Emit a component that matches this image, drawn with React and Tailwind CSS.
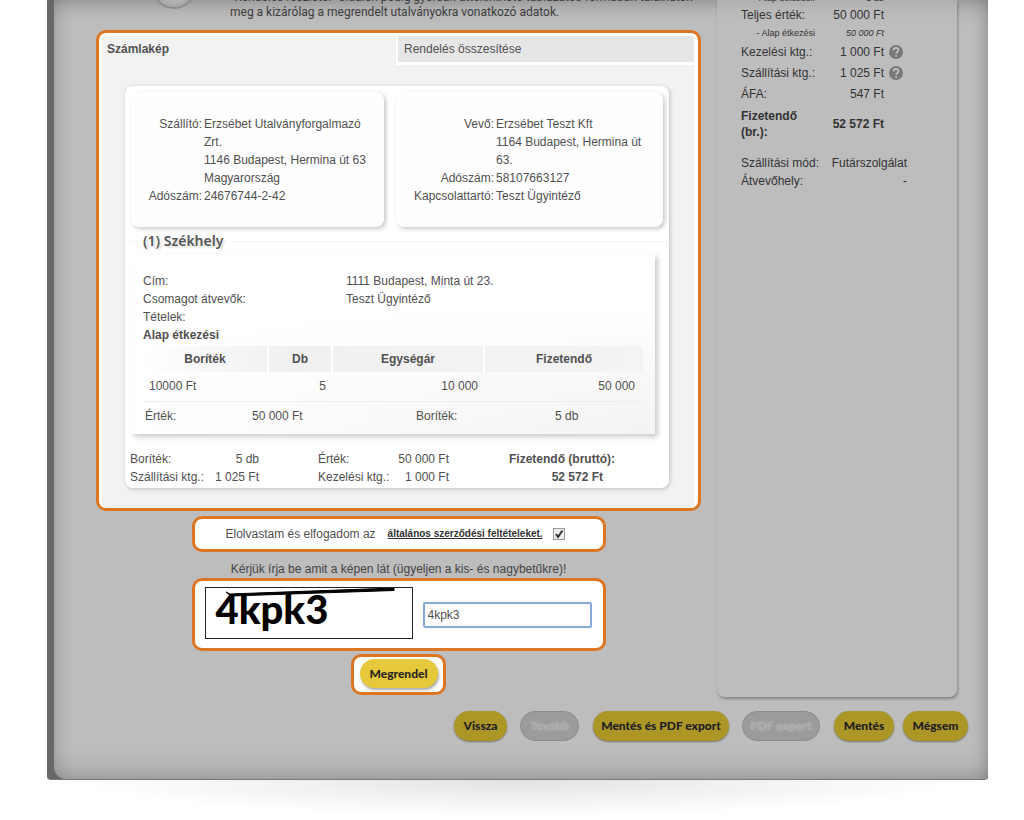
import React, { useState } from "react";

const parties = [
  {
    id: "supplier",
    labelWidth: "w-[71px]",
    valueWidth: "w-[172px]",
    rows: [
      { label: "Szállító:", value: "Erzsébet Utalványforgalmazó Zrt." },
      { label: "", value: "1146 Budapest, Hermina út 63 Magyarország" },
      { label: "Adószám:", value: "24676744-2-42" },
    ],
  },
  {
    id: "customer",
    labelWidth: "w-[98px]",
    valueWidth: "w-[158px]",
    rows: [
      { label: "Vevő:", value: "Erzsébet Teszt Kft" },
      { label: "", value: "1164 Budapest, Hermina út 63." },
      { label: "Adószám:", value: "58107663127" },
      { label: "Kapcsolattartó:", value: "Teszt Ügyintéző" },
    ],
  },
];

const yellowButton =
  "h-[30px] rounded-full bg-[#ac9726] font-['Lato',sans-serif] text-xs font-black text-[#1c1c22] shadow-[0_1px_2px_rgba(0,0,0,0.4)]";
const disabledButton =
  "h-[30px] rounded-full border border-[#8c8c8c] bg-[#9b9b9b] font-['Lato',sans-serif] text-xs font-black text-[#adadad] [text-shadow:0_0_3px_#b4b4b4]";
const highlight = "border-3 border-[#dc7622] bg-white rounded-[10px]";

const HelpIcon = () => (
  <svg width="16" height="16" viewBox="0 0 16 16" aria-hidden="true">
    <circle cx="8" cy="8" r="7" fill="#787878" />
    <path
      d="M5.6 6.3c0-3.2 5-3.1 4.9-.2 0 1.9-2.3 1.8-2.3 3.6M8.1 11.3v1.4"
      fill="none"
      stroke="#c2c2c2"
      strokeWidth="1.8"
    />
  </svg>
);

const InfoHeader = () => (
  <header className="flex h-[30px] items-end overflow-hidden pb-2.5 pl-[57px]">
    <svg
      className="shrink-0"
      width="48"
      height="48"
      viewBox="0 0 48 48"
      aria-hidden="true"
    >
      <circle cx="21" cy="15" r="21" fill="#a9a9a9" stroke="#8b8b8b" strokeWidth="2" />
      <circle cx="21" cy="15" r="17" fill="#b1b1b1" />
      <path d="M21 2v20" stroke="#8b8b8b" strokeWidth="5" />
    </svg>
    <p className="ml-[29px] font-['Roboto',sans-serif] leading-[15px] whitespace-nowrap text-[#3c3c3c]">
      “Rendelés részletei” oldalon pedig gyorsan áttekinthető táblázatos formában
      találhatók
      <br />
      meg a kizárólag a megrendelt utalványokra vonatkozó adatok.
    </p>
  </header>
);

const PartyCard = ({ party, className }) => (
  <section
    className={`h-[135px] rounded-lg bg-[#fefefe] pt-[23px] shadow-[2px_2px_4px_rgba(0,0,0,0.22)] ${className}`}
  >
    <dl>
      {party.rows.map((row) => (
        <div key={row.value} className="flex gap-0.5">
          <dt className={`shrink-0 text-right ${party.labelWidth}`}>{row.label}</dt>
          <dd className={party.valueWidth}>{row.value}</dd>
        </div>
      ))}
    </dl>
  </section>
);

const Invoice = () => (
  <div className="mt-[21px] mr-[25px] ml-[23px] rounded-lg bg-white pt-1.5 pr-1 pl-1.5 shadow-[1px_1px_4px_rgba(0,0,0,0.22)]">
    <div className="flex gap-3 pr-0.5">
      <PartyCard party={parties[0]} className="w-[253px] shrink-0" />
      <PartyCard party={parties[1]} className="min-w-0 flex-1" />
    </div>

    <fieldset className="mt-1 border-t border-[#f3f3f3] pr-2.5">
      <legend className="ml-2 px-1 font-['Noto_Sans',sans-serif] text-sm leading-5 font-semibold text-[#555] [text-shadow:2px_2px_2px_#ddd]">
        (1) Székhely
      </legend>
      <div className="mt-[3px] h-[180px] bg-linear-to-b from-white from-30% to-[#f3f3f3] shadow-[3px_3px_5px_rgba(0,0,0,0.2)]">
        <div className="h-full bg-linear-to-r from-white to-transparent pt-[18px] pr-3 pl-3">
          <dl className="grid grid-cols-[203px_1fr]">
            <dt>Cím:</dt>
            <dd>1111 Budapest, Minta út 23.</dd>
            <dt>Csomagot átvevők:</dt>
            <dd>Teszt Ügyintéző</dd>
            <dt>Tételek:</dt>
            <dd></dd>
          </dl>
          <h3 className="font-bold">Alap étkezési</h3>
          <table className="mt-0.5 w-full table-fixed border-collapse">
            <colgroup>
              <col className="w-[125px]" />
              <col className="w-16" />
              <col className="w-[152px]" />
              <col />
            </colgroup>
            <thead>
              <tr className="h-[26px] bg-linear-to-r from-transparent via-[#f0f0f0] via-30% to-[#f4f4f4]">
                <th className="border-r-2 border-white">Boríték</th>
                <th className="border-r-2 border-white">Db</th>
                <th className="border-r-2 border-white">Egységár</th>
                <th>Fizetendő</th>
              </tr>
            </thead>
            <tbody>
              <tr className="h-[29px] border-b border-[#eee] text-right">
                <td className="pl-1.5 text-left">10000 Ft</td>
                <td className="pr-1.5">5</td>
                <td className="pr-1.5">10 000</td>
                <td className="pr-2">50 000</td>
              </tr>
            </tbody>
          </table>
          <div className="mt-[5px] flex">
            <span className="w-[109px] pl-0.5">Érték:</span>
            <span className="w-[164px]">50 000 Ft</span>
            <span className="w-[139px]">Boríték:</span>
            <span>5 db</span>
          </div>
        </div>
      </div>
    </fieldset>

    <div className="-ml-px grid grid-cols-[82px_47px_59px_78px_53px_1fr] pt-4 pb-0.5">
      <span>Boríték:</span>
      <span className="text-right">5 db</span>
      <span />
      <span>Érték:</span>
      <span className="text-right whitespace-nowrap">50 000 Ft</span>
      <strong className="pr-[50px] text-right whitespace-nowrap">Fizetendő (bruttó):</strong>
      <span className="whitespace-nowrap">Szállítási ktg.:</span>
      <span className="text-right whitespace-nowrap">1 025 Ft</span>
      <span />
      <span className="whitespace-nowrap">Kezelési ktg.:</span>
      <span className="text-right whitespace-nowrap">1 000 Ft</span>
      <strong className="pr-[62px] text-right">52 572 Ft</strong>
    </div>
  </div>
);

const OrderForm = () => {
  const [accepted, setAccepted] = useState(true);
  const [captcha, setCaptcha] = useState("4kpk3");

  return (
    <form className="flex flex-col items-center" onSubmit={(e) => e.preventDefault()}>
      <div className={`mt-[5px] flex h-9 w-[414px] items-center pl-[31px] ${highlight}`}>
        <label htmlFor="accept">Elolvastam és elfogadom az</label>
        <a href="#aszf" className="ml-3 text-[10px] font-bold text-[#333] underline">
          általános szerződési feltételeket.
        </a>
        <span className="relative ml-2.5 flex h-3 w-3">
          <input
            id="accept"
            type="checkbox"
            checked={accepted}
            onChange={(e) => setAccepted(e.target.checked)}
            className="h-3 w-3 appearance-none border border-[#999] bg-[#eee]"
          />
          {accepted && (
            <svg
              className="pointer-events-none absolute inset-0"
              width="12"
              height="12"
              viewBox="0 0 12 12"
              aria-hidden="true"
            >
              <path d="M3 6l2 3 4.500-6.500" fill="none" stroke="#333" strokeWidth="2" />
            </svg>
          )}
        </span>
      </div>

      <label htmlFor="captcha" className="mt-2 text-[#444]">
        Kérjük írja be amit a képen lát (ügyeljen a kis- és nagybetűkre)!
      </label>

      <div
        className={`flex h-[73px] w-[414px] items-center gap-2.5 pl-2.5 ${highlight}`}
      >
        <div className="relative -mt-1 h-[52px] w-[208px] border border-[#222] pl-[10px] font-['Lato',sans-serif] text-[40px] leading-[42px] font-black text-black">
          4kpk3
          <svg
            className="absolute inset-0"
            width="206"
            height="50"
            viewBox="0 0 206 50"
            aria-hidden="true"
          >
            <path d="M20 4l5 4L188 2.500V0L24 6z" fill="#000" stroke="#000" />
          </svg>
        </div>
        <input
          id="captcha"
          type="text"
          value={captcha}
          onChange={(e) => setCaptcha(e.target.value)}
          className="h-[26px] w-[169px] rounded-xs border-2 border-[#86a9d8] px-[3px] outline-none"
        />
      </div>

      <div className={`mt-[3px] flex h-[41px] w-[95px] justify-center pt-0.5 ${highlight}`}>
        <button
          type="submit"
          className="h-[29px] rounded-full bg-[#e6c93a] px-2.5 font-['Lato',sans-serif] text-xs font-black text-[#2a2520] shadow-[1px_2px_3px_rgba(0,0,0,0.35)]"
        >
          Megrendel
        </button>
      </div>
    </form>
  );
};

const Summary = () => (
  <aside className="w-60 shrink-0 rounded-b-lg bg-[#bdbdbd]/60 pl-6 text-[#333] shadow-[1px_2px_3px_rgba(0,0,0,0.3)]">
    <table className="-mt-2.5 w-[166px] table-fixed border-collapse">
      <colgroup>
        <col className="w-20" />
        <col className="w-[63px]" />
        <col />
      </colgroup>
      <tbody>
        <tr className="h-4 text-[9px] leading-3">
          <td className="pr-1.5 text-right whitespace-nowrap">- Alap étkezési:</td>
          <td className="text-right">5 db</td>
          <td></td>
        </tr>
        <tr className="h-[18px]">
          <td>Teljes érték:</td>
          <td className="text-right">50 000 Ft</td>
          <td></td>
        </tr>
        <tr className="h-[18px] text-[9px] leading-3">
          <td className="pr-1.5 text-right whitespace-nowrap">- Alap étkezési</td>
          <td className="text-right italic">50 000 Ft</td>
          <td></td>
        </tr>
        <tr className="h-5">
          <td>Kezelési ktg.:</td>
          <td className="text-right">1 000 Ft</td>
          <td className="pl-1"><HelpIcon /></td>
        </tr>
        <tr className="h-[22px]">
          <td>Szállítási ktg.:</td>
          <td className="text-right">1 025 Ft</td>
          <td className="pl-1"><HelpIcon /></td>
        </tr>
        <tr className="h-5">
          <td>ÁFA:</td>
          <td className="text-right">547 Ft</td>
          <td></td>
        </tr>
        <tr className="h-10 font-bold">
          <td className="leading-4">Fizetendő (br.):</td>
          <td className="text-right whitespace-nowrap">52 572 Ft</td>
          <td></td>
        </tr>
      </tbody>
    </table>
    <dl className="mt-2.5 grid w-[166px] grid-cols-[82px_1fr] whitespace-nowrap">
      <dt>Szállítási mód:</dt>
      <dd className="text-right">Futárszolgálat</dd>
      <dt>Átvevőhely:</dt>
      <dd className="text-right">-</dd>
    </dl>
  </aside>
);

const App = () => {
  const [tab, setTab] = useState("invoice");

  return (
    <div className="overflow-hidden bg-white pr-9 pb-10 pl-[47px] font-['Liberation_Sans',Arial,sans-serif] text-xs leading-[18px] text-[#505050]">
      <div className="rounded-b-sm border-b border-[#7a7a7a] bg-[#686868] pl-[7px]">
        <div className="rounded-bl-xl bg-[#bdbdbd] pb-[38px] shadow-[inset_0_-14px_24px_-6px_rgba(0,0,0,0.15),inset_0_14px_20px_-8px_rgba(0,0,0,0.16),inset_-8px_0_16px_-4px_rgba(0,0,0,0.12),inset_8px_0_20px_-6px_rgba(0,0,0,0.08)]">
          <div className="flex gap-4 pr-[31px] pl-[42px]">
            <main className="min-w-0 flex-1 pb-0.5">
              <InfoHeader />
              <div className={`overflow-hidden pt-[3px] pr-1 pl-[3px] ${highlight}`}>
                <div className="bg-[#f2f2f2] pb-5">
                  <div className="flex items-start leading-[26px]" role="tablist">
                    <button
                      type="button"
                      role="tab"
                      aria-selected={tab === "invoice"}
                      onClick={() => setTab("invoice")}
                      className="w-[294px] pl-[5px] text-left font-bold"
                    >
                      Számlakép
                    </button>
                    <button
                      type="button"
                      role="tab"
                      aria-selected={tab === "summary"}
                      onClick={() => setTab("summary")}
                      className="flex-1 border-b-3 border-l-2 border-white bg-[#e6e6e6] pl-1.5 text-left"
                    >
                      Rendelés összesítése
                    </button>
                  </div>
                  <Invoice />
                </div>
              </div>
              <OrderForm />
            </main>
            <Summary />
          </div>
          <div className="mt-3.5 flex justify-end pr-5">
            <button type="button" className={`mr-[13px] w-[53px] ${yellowButton}`}>
              Vissza
            </button>
            <button type="button" disabled className={`mr-3.5 w-[59px] ${disabledButton}`}>
              Tovább
            </button>
            <button type="button" className={`mr-[13px] w-[136px] ${yellowButton}`}>
              Mentés és PDF export
            </button>
            <button type="button" disabled className={`mr-3.5 w-[78px] ${disabledButton}`}>
              PDF export
            </button>
            <button type="button" className={`mr-[9px] w-[60px] ${yellowButton}`}>
              Mentés
            </button>
            <button type="button" className={`w-[65px] ${yellowButton}`}>
              Mégsem
            </button>
          </div>
        </div>
      </div>
      <div className="mx-8 h-9 bg-radial-[ellipse_50%_100%_at_50%_0%] from-[#e2e2e2] to-white" />
    </div>
  );
};

export default App;
